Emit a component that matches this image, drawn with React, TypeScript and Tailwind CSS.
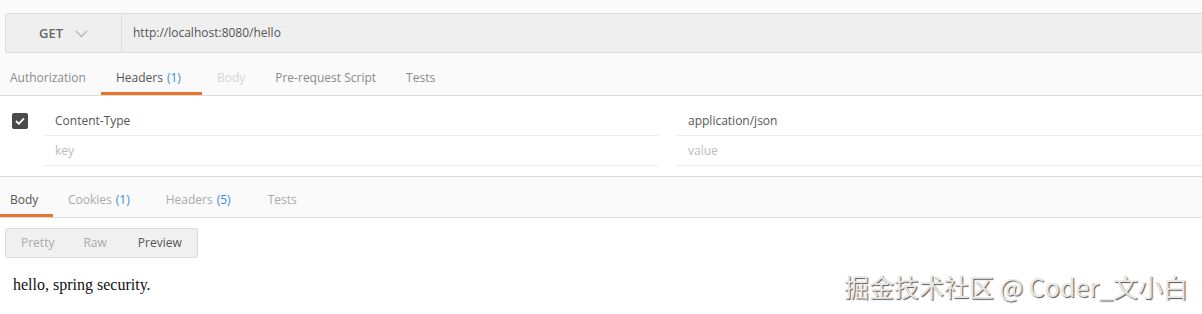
import React from "react";

const tabFont = "font-['Open_Sans',sans-serif]";

const App = () => {
  return (
    <div className={`relative w-[1202px] h-[314px] overflow-hidden bg-white ${tabFont} text-[12px]`}>
      {/* request bar */}
      <div className="bg-[#fafafa] pt-[13px]">
        <div className="ml-[5px] flex h-[40px] border border-r-0 border-[#dcdcdc] rounded-l-[3px] bg-[#efefef]">
          <div className="flex w-[116px] items-center justify-center gap-[12px] border-r border-[#dcdcdc] pt-[1px]">
            <span className="text-[13px] font-semibold text-[#666]">GET</span>
            <svg width="13" height="8" viewBox="0 0 13 8" fill="none" stroke="#b5b5b5" strokeWidth="1.3">
              <path d="M1 1l5.5 5.5L12 1" />
            </svg>
          </div>
          <div className="flex items-center pl-[11px] text-[#555]">http://localhost:8080/hello</div>
        </div>

        {/* request tabs */}
        <div className="flex h-[43px] border-b border-[#dcdcdc] text-[#8a8a8a]">
          <div className="flex items-center pl-[10px] pr-[15px] pt-[7px]">Authorization</div>
          <div className="flex w-[101px] items-center border-b-[3px] border-[#e8752b] pl-[15px] pt-[10px] text-[#555]">
            Headers <span className="ml-[4px] text-[#3a8fd9]">(1)</span>
          </div>
          <div className="flex items-center px-[15px] pt-[7px] text-[#d4d4d4]">Body</div>
          <div className="flex items-center px-[15px] pt-[7px]">Pre-request Script</div>
          <div className="flex items-center pl-[15px] pt-[7px]">Tests</div>
        </div>
      </div>

      {/* header rows */}
      <div className="flex h-[81px] flex-col border-b border-[#dcdcdc]">
        <div className="flex h-[40px]">
          <div className="flex w-[44px] items-center pl-[12px] pt-[9px]">
            <div className="flex h-[16px] w-[16px] items-center justify-center rounded-[2px] bg-[#4b4b4b]">
              <svg width="10" height="8" viewBox="0 0 10 8" fill="none" stroke="#fff" strokeWidth="1.8">
                <path d="M1 4l2.8 2.8L9 1.3" />
              </svg>
            </div>
          </div>
          <div className="flex w-[614px] items-center border-b border-[#ececec] pl-[11px] pt-[10px] text-[#555]">Content-Type</div>
          <div className="w-[19px]" />
          <div className="flex flex-1 items-center border-b border-[#ececec] pl-[11px] pt-[10px] text-[#555]">application/json</div>
        </div>
        <div className="flex h-[30px]">
          <div className="w-[44px]" />
          <div className="flex w-[614px] items-center border-b border-[#ececec] pl-[11px] pt-[1px] text-[#bbb]">key</div>
          <div className="w-[19px]" />
          <div className="flex flex-1 items-center border-b border-[#ececec] pl-[11px] pt-[1px] text-[#bbb]">value</div>
        </div>
      </div>

      {/* response tabs */}
      <div className="flex h-[41px] border-b border-[#dcdcdc] bg-[#fafafa] text-[#aaa]">
        <div className="flex w-[53px] items-center border-b-[3px] border-[#e8752b] pl-[10px] pt-[9px] text-[#555]">Body</div>
        <div className="flex items-center pl-[15px] pr-[36px] pt-[6px]">
          Cookies <span className="ml-[4px] text-[#3a8fd9]">(1)</span>
        </div>
        <div className="flex items-center pr-[37px] pt-[6px]">
          Headers <span className="ml-[4px] text-[#3a8fd9]">(5)</span>
        </div>
        <div className="flex items-center pt-[6px]">Tests</div>
      </div>

      {/* response body */}
      <div className="pl-[5px] pt-[10px]">
        <div className="flex h-[30px] w-[193px] items-center rounded-[3px] border border-[#dcdcdc] bg-[#f0f0f0]">
          <span className="pl-[15px] pr-[29px] text-[#aaa]">Pretty</span>
          <span className="pr-[31px] text-[#aaa]">Raw</span>
          <span className="text-[#555]">Preview</span>
        </div>
      </div>
      <div className="pl-[13px] pt-[15px] font-['Liberation_Serif',serif] text-[16px] text-[#111]">
        hello, spring security.
      </div>

      {/* watermark */}
      <div className="absolute right-[14px] top-[268px] font-['Noto_Sans_CJK_SC',sans-serif] text-[25px] text-[#e8e8e8] [text-shadow:1px_1px_1px_#555]">
        掘金技术社区 @ Coder_文小白
      </div>
    </div>
  );
};

export default App;
